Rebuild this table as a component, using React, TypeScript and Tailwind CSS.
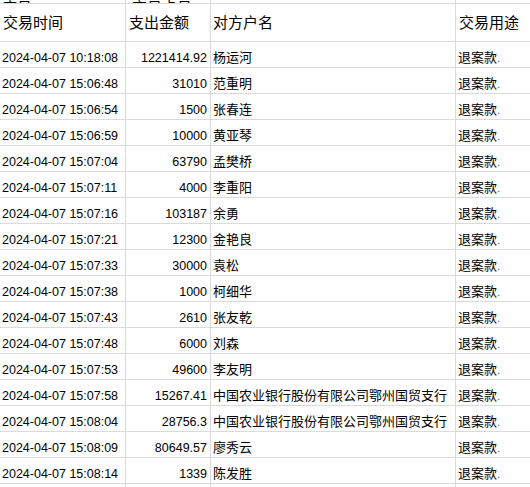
import type { ReactNode } from "react";

// Bank statement excerpt, drawn like a spreadsheet grid.
type Row = { time: string; amount: string; name: string };

const ROWS: Row[] = [
  { time: "2024-04-07 10:18:08", amount: "1221414.92", name: "杨运河" },
  { time: "2024-04-07 15:06:48", amount: "31010", name: "范重明" },
  { time: "2024-04-07 15:06:54", amount: "1500", name: "张春连" },
  { time: "2024-04-07 15:06:59", amount: "10000", name: "黄亚琴" },
  { time: "2024-04-07 15:07:04", amount: "63790", name: "孟樊桥" },
  { time: "2024-04-07 15:07:11", amount: "4000", name: "李重阳" },
  { time: "2024-04-07 15:07:16", amount: "103187", name: "余勇" },
  { time: "2024-04-07 15:07:21", amount: "12300", name: "金艳良" },
  { time: "2024-04-07 15:07:33", amount: "30000", name: "袁松" },
  { time: "2024-04-07 15:07:38", amount: "1000", name: "柯细华" },
  { time: "2024-04-07 15:07:43", amount: "2610", name: "张友乾" },
  { time: "2024-04-07 15:07:48", amount: "6000", name: "刘森" },
  { time: "2024-04-07 15:07:53", amount: "49600", name: "李友明" },
  { time: "2024-04-07 15:07:58", amount: "15267.41", name: "中国农业银行股份有限公司鄂州国贸支行" },
  { time: "2024-04-07 15:08:04", amount: "28756.3", name: "中国农业银行股份有限公司鄂州国贸支行" },
  { time: "2024-04-07 15:08:09", amount: "80649.57", name: "廖秀云" },
  { time: "2024-04-07 15:08:14", amount: "1339", name: "陈发胜" },
];

const COLS = "grid grid-cols-[126px_85px_245px_1fr]";

function Cell({ className = "", children }: { className?: string; children?: ReactNode }) {
  return (
    <div className={`flex overflow-hidden whitespace-nowrap border-r border-b border-[#dadada] ${className}`}>
      {children}
    </div>
  );
}

export default function App() {
  return (
    <div className="h-[487px] w-[530px] overflow-hidden bg-white font-['Liberation_Sans','Noto_Sans_CJK_SC',sans-serif] text-black">
      {/* row above the header, scrolled almost out of view */}
      <div className={`${COLS} h-[4px]`}>
        <Cell className="items-end pl-[2px] text-[15px] leading-none">
          <span className="mb-[-12px]">序号</span>
        </Cell>
        <Cell className="items-end pl-[6px] text-[15px] leading-none">
          <span className="mb-[-12px]">交易卡号</span>
        </Cell>
        <Cell />
        <Cell className="border-r-0" />
      </div>

      <div className={`${COLS} h-[38px] text-[15px] leading-none`}>
        <Cell className="items-center pl-[3px]">交易时间</Cell>
        <Cell className="items-center pl-[3px]">支出金额</Cell>
        <Cell className="items-center pl-[2px]">对方户名</Cell>
        <Cell className="items-center border-r-0 pl-[3px]">交易用途</Cell>
      </div>

      {ROWS.map((row) => (
        <div key={row.time} className={`${COLS} h-[26px] leading-none`}>
          <Cell className="items-end pb-[3px] pl-[2px] text-[12.5px]">{row.time}</Cell>
          <Cell className="items-end justify-end pb-[3px] pr-[3px] text-[12.5px]">{row.amount}</Cell>
          <Cell className="items-end pb-[3px] pl-[2px] text-[13px]">{row.name}</Cell>
          <Cell className="items-end border-r-0 pb-[3px] pl-[2px] text-[13px]">
            退案款<span className="text-[11px] text-gray-600">.</span>
          </Cell>
        </div>
      ))}

      <div className={`${COLS} h-[26px]`}>
        <Cell />
        <Cell />
        <Cell />
        <Cell className="border-r-0" />
      </div>
    </div>
  );
}
